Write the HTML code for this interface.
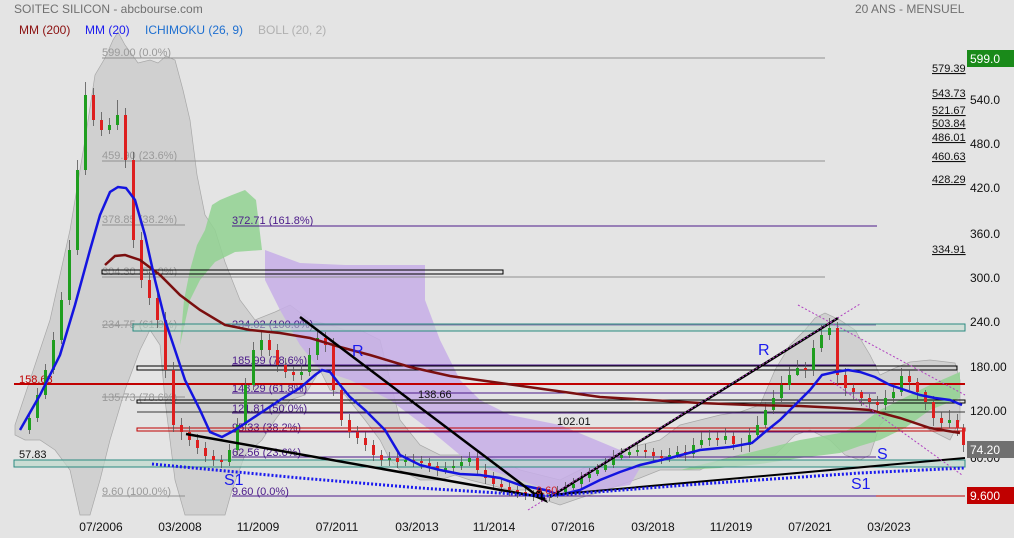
<!DOCTYPE html>
<html><head><meta charset="utf-8"><style>
body{margin:0;background:#e4e4e4;font-family:"Liberation Sans",sans-serif;}
svg{display:block}
</style></head><body>
<svg width="1014" height="538" xmlns="http://www.w3.org/2000/svg" font-family="Liberation Sans, sans-serif">
<rect width="1014" height="538" fill="#e4e4e4"/>
<polygon fill="#d0d0d0" stroke="#a8a8a8" stroke-width="0.7" points="15,425 30,380 50,320 70,230 85,140 95,75 105,58 113,40 118,32 125,45 138,63 150,60 158,63 166,56 175,60 183,90 190,120 197,175 205,215 215,230 225,262 240,300 255,320 275,312 290,305 310,320 330,325 345,330 360,330 380,340 400,420 420,445 440,455 460,455 480,455 500,460 520,470 540,475 560,480 580,470 600,460 620,450 640,445 660,440 680,425 700,420 720,415 740,412 760,405 775,370 790,345 805,330 815,318 825,313 840,320 855,330 870,355 880,375 895,368 910,362 930,360 955,363 960,380 960,420 950,440 930,430 910,420 895,410 880,425 870,455 860,460 845,455 830,440 810,430 795,435 775,455 760,455 740,455 720,460 700,470 680,470 660,470 640,478 620,485 600,492 580,498 560,505 545,500 530,490 510,490 490,485 470,480 455,475 440,480 420,480 400,470 390,460 380,440 365,420 345,395 330,390 320,370 305,395 290,400 275,420 262,440 245,455 232,490 225,515 210,515 195,515 185,515 175,480 165,400 160,345 150,330 140,350 125,390 110,440 100,480 90,515 80,515 70,470 55,450 40,440 25,440 15,435"/>
<polygon fill="#c7aee8" opacity="0.85" points="265,250 300,263 345,265 425,265 425,300 440,340 460,380 480,400 510,415 560,425 620,450 640,468 630,485 600,490 560,495 520,480 490,470 460,455 430,430 390,400 350,380 320,370 300,345 280,310 265,280"/>
<polygon fill="#92d292" opacity="0.85" points="180,345 184,300 190,270 197,245 205,230 212,205 220,200 232,195 245,190 256,200 262,250 235,252 215,262 200,280 190,300"/>
<polygon fill="#92d292" opacity="0.85" points="680,470 720,460 760,450 800,440 840,433 860,425 880,410 900,400 930,385 960,372 960,398 930,410 905,428 880,440 860,446 840,453 800,458 760,464 720,468"/>
<g stroke="#909090" stroke-width="1">
<line x1="102" y1="58" x2="825" y2="58"/><line x1="102" y1="161" x2="825" y2="161"/><line x1="102" y1="225" x2="185" y2="225"/><line x1="102" y1="277" x2="825" y2="277"/><line x1="102" y1="325" x2="185" y2="325"/><line x1="102" y1="397" x2="185" y2="397"/><line x1="102" y1="496" x2="185" y2="496"/>
</g>
<g font-size="11" fill="#9a9a9a">
<text x="102" y="56">599.00  (0.0%)</text><text x="102" y="159">459.90  (23.6%)</text><text x="102" y="223">378.85  (38.2%)</text><text x="102" y="275">304.30  (50.0%)</text><text x="102" y="328">234.75  (61.8%)</text><text x="102" y="401">135.73  (78.6%)</text><text x="102" y="495">9.60  (100.0%)</text>
</g>
<g stroke="#4b1a8a" stroke-width="1">
<line x1="232" y1="226" x2="877" y2="226"/><line x1="232" y1="325" x2="876" y2="325"/><line x1="232" y1="365" x2="876" y2="365"/><line x1="232" y1="393" x2="876" y2="393"/><line x1="232" y1="413" x2="876" y2="413"/><line x1="232" y1="432" x2="876" y2="432"/><line x1="232" y1="457" x2="876" y2="457"/><line x1="232" y1="496" x2="876" y2="496"/>
</g>
<line x1="876" y1="496" x2="965" y2="496" stroke="#c00000"/>
<g font-size="11" fill="#4b1a8a">
<text x="232" y="224">372.71  (161.8%)</text><text x="232" y="328">234.02  (100.0%)</text><text x="232" y="364">185.99  (78.6%)</text><text x="232" y="392">148.29  (61.8%)</text><text x="232" y="412">121.81  (50.0%)</text><text x="232" y="431">95.33  (38.2%)</text><text x="232" y="456">62.56  (23.6%)</text><text x="232" y="495">9.60  (0.0%)</text>
</g>
<rect x="133" y="324" width="832" height="7" fill="#bfd9cc" fill-opacity="0.5" stroke="#2a8a80"/>
<rect x="14" y="460" width="951" height="7" fill="#bfd9cc" fill-opacity="0.7" stroke="#2a8a80"/>
<line x1="14" y1="384" x2="965" y2="384" stroke="#c00000" stroke-width="2"/>
<rect x="102" y="270" width="401" height="4" fill="none" stroke="#000"/>
<rect x="137" y="366" width="820" height="4" fill="none" stroke="#000"/>
<rect x="137" y="400" width="828" height="3" fill="none" stroke="#000"/>
<line x1="137" y1="412" x2="965" y2="412" stroke="#000" stroke-width="0.8"/>
<rect x="137" y="428" width="828" height="3" fill="none" stroke="#c00000"/>
<text x="19" y="383" font-size="11" fill="#c00000">158.68</text>
<text x="19" y="458" font-size="11" fill="#111">57.83</text>
<text x="418" y="398" font-size="11" fill="#111">138.66</text>
<text x="557" y="425" font-size="11" fill="#111">102.01</text>
<!-- candle wicks -->
<path fill="none" stroke="#555" stroke-width="0.8" d="M29.5 412V434M37.5 388V422M45.5 364V399M53.5 332V374M61.5 292V344M69.5 240V305M77.5 160V255M85.5 82V175M93.5 88V126M101.5 112V136M109.5 118V134M117.5 100V130M125.5 108V168M133.5 152V248M141.5 232V288M149.5 272V305M157.5 290V328M165.5 312V378M173.5 362V432M181.5 418V440M189.5 426V446M197.5 434V454M205.5 442V462M213.5 450V466M221.5 455V468M229.5 444V466M237.5 418V455M245.5 378V430M253.5 342V390M261.5 330V356M269.5 334V356M277.5 344V372M285.5 358V378M293.5 366V381M301.5 365V380M309.5 348V376M317.5 330V360M325.5 332V352M333.5 338V396M341.5 384V426M349.5 414V438M357.5 426V444M365.5 432V451M373.5 440V461M381.5 450V466M389.5 452V466M397.5 452V468M405.5 454V466M413.5 454V467M421.5 456V469M429.5 458V472M437.5 462V476M445.5 462V474M453.5 460V472M461.5 456V470M469.5 452V466M477.5 452V476M485.5 464V484M493.5 472V490M501.5 478V493M509.5 482V496M517.5 486V498M525.5 488V500M533.5 490V501M541.5 490V502M549.5 489V501M557.5 486V498M565.5 482V494M573.5 478V490M581.5 472V488M589.5 468V482M597.5 464V476M605.5 458V472M613.5 450V468M621.5 448V460M629.5 446V458M637.5 444V456M645.5 444V458M653.5 448V462M661.5 450V464M669.5 448V462M677.5 446V458M685.5 445V461M693.5 438V458M701.5 432V448M709.5 430V446M717.5 432V446M725.5 428V444M733.5 432V450M741.5 438V452M749.5 428V452M757.5 416V440M765.5 402V428M773.5 390V414M781.5 376V402M789.5 366V390M797.5 360V376M805.5 362V378M813.5 340V376M821.5 325V352M829.5 318V340M837.5 322V384M845.5 368V396M853.5 384V400M861.5 390V406M869.5 394V410M877.5 396V412M885.5 390V410M893.5 384V402M901.5 368V396M909.5 370V390M917.5 378V400M925.5 390V410M933.5 396V426M941.5 412V430M949.5 410V428M957.5 414V436M963.5 424V452"/>
<g fill="#1f9e1f">
<rect x="28" y="418" width="3" height="12"/><rect x="36" y="395" width="3" height="23"/><rect x="44" y="370" width="3" height="25"/><rect x="52" y="340" width="3" height="30"/><rect x="60" y="300" width="3" height="40"/><rect x="68" y="250" width="3" height="50"/><rect x="76" y="170" width="3" height="80"/><rect x="84" y="95" width="3" height="75"/><rect x="108" y="125" width="3" height="5"/><rect x="116" y="115" width="3" height="10"/><rect x="228" y="450" width="3" height="12"/><rect x="236" y="425" width="3" height="25"/><rect x="244" y="385" width="3" height="40"/><rect x="252" y="350" width="3" height="35"/><rect x="260" y="340" width="3" height="10"/><rect x="300" y="372" width="3" height="3"/><rect x="308" y="355" width="3" height="17"/><rect x="316" y="338" width="3" height="17"/><rect x="388" y="458" width="3" height="2"/><rect x="404" y="460" width="3" height="2"/><rect x="444" y="468" width="3" height="2"/><rect x="452" y="466" width="3" height="2"/><rect x="460" y="462" width="3" height="4"/><rect x="468" y="458" width="3" height="4"/><rect x="548" y="495" width="3" height="2"/><rect x="556" y="492" width="3" height="3"/><rect x="564" y="488" width="3" height="4"/><rect x="572" y="484" width="3" height="4"/><rect x="580" y="478" width="3" height="6"/><rect x="588" y="474" width="3" height="4"/><rect x="596" y="470" width="3" height="4"/><rect x="604" y="465" width="3" height="5"/><rect x="612" y="458" width="3" height="7"/><rect x="620" y="455" width="3" height="3"/><rect x="628" y="452" width="3" height="3"/><rect x="636" y="450" width="3" height="2"/><rect x="668" y="455" width="3" height="3"/><rect x="676" y="452" width="3" height="3"/><rect x="692" y="445" width="3" height="9"/><rect x="700" y="440" width="3" height="5"/><rect x="708" y="438" width="3" height="2"/><rect x="724" y="436" width="3" height="4"/><rect x="748" y="435" width="3" height="10"/><rect x="756" y="425" width="3" height="10"/><rect x="764" y="410" width="3" height="15"/><rect x="772" y="398" width="3" height="12"/><rect x="780" y="385" width="3" height="13"/><rect x="788" y="375" width="3" height="10"/><rect x="796" y="368" width="3" height="7"/><rect x="812" y="348" width="3" height="22"/><rect x="820" y="335" width="3" height="13"/><rect x="828" y="328" width="3" height="7"/><rect x="884" y="398" width="3" height="7"/><rect x="892" y="392" width="3" height="6"/><rect x="900" y="376" width="3" height="16"/><rect x="948" y="420" width="3" height="3"/>
</g>
<g fill="#dd1f1f">
<rect x="92" y="95" width="3" height="25"/><rect x="100" y="120" width="3" height="10"/><rect x="124" y="115" width="3" height="45"/><rect x="132" y="160" width="3" height="80"/><rect x="140" y="240" width="3" height="40"/><rect x="148" y="280" width="3" height="18"/><rect x="156" y="298" width="3" height="22"/><rect x="164" y="320" width="3" height="50"/><rect x="172" y="370" width="3" height="55"/><rect x="180" y="425" width="3" height="7"/><rect x="188" y="432" width="3" height="8"/><rect x="196" y="440" width="3" height="8"/><rect x="204" y="448" width="3" height="8"/><rect x="212" y="456" width="3" height="4"/><rect x="220" y="460" width="3" height="2"/><rect x="268" y="340" width="3" height="10"/><rect x="276" y="350" width="3" height="15"/><rect x="284" y="365" width="3" height="7"/><rect x="292" y="372" width="3" height="3"/><rect x="324" y="338" width="3" height="7"/><rect x="332" y="345" width="3" height="45"/><rect x="340" y="390" width="3" height="30"/><rect x="348" y="420" width="3" height="12"/><rect x="356" y="432" width="3" height="6"/><rect x="364" y="438" width="3" height="7"/><rect x="372" y="445" width="3" height="10"/><rect x="380" y="455" width="3" height="5"/><rect x="396" y="458" width="3" height="4"/><rect x="412" y="460" width="3" height="2"/><rect x="420" y="461" width="3" height="2"/><rect x="428" y="463" width="3" height="3"/><rect x="436" y="466" width="3" height="4"/><rect x="476" y="458" width="3" height="12"/><rect x="484" y="470" width="3" height="8"/><rect x="492" y="478" width="3" height="6"/><rect x="500" y="484" width="3" height="3"/><rect x="508" y="487" width="3" height="3"/><rect x="516" y="490" width="3" height="2"/><rect x="524" y="492" width="3" height="2"/><rect x="532" y="494" width="3" height="2"/><rect x="540" y="495" width="3" height="2"/><rect x="644" y="450" width="3" height="2"/><rect x="652" y="452" width="3" height="4"/><rect x="660" y="456" width="3" height="2"/><rect x="684" y="452" width="3" height="2"/><rect x="716" y="438" width="3" height="2"/><rect x="732" y="436" width="3" height="8"/><rect x="740" y="444" width="3" height="2"/><rect x="804" y="368" width="3" height="2"/><rect x="836" y="328" width="3" height="47"/><rect x="844" y="375" width="3" height="13"/><rect x="852" y="388" width="3" height="4"/><rect x="860" y="392" width="3" height="6"/><rect x="868" y="398" width="3" height="4"/><rect x="876" y="402" width="3" height="3"/><rect x="908" y="376" width="3" height="6"/><rect x="916" y="382" width="3" height="10"/><rect x="924" y="392" width="3" height="10"/><rect x="932" y="402" width="3" height="16"/><rect x="940" y="418" width="3" height="5"/><rect x="956" y="420" width="3" height="8"/><rect x="962" y="428" width="3" height="17"/>
</g>
<polyline fill="none" stroke="#7a0f0f" stroke-width="2.5" points="105,265 115,256 125,255 140,260 160,275 180,295 200,310 225,325 250,330 280,333 310,338 340,347 370,355 410,367 450,376 500,383 550,390 600,397 650,400 700,403 750,405 800,406 840,408 870,410 900,418 930,428 960,433"/>
<polyline fill="none" stroke="#1414e0" stroke-width="2.5" points="20,430 40,395 60,355 75,305 90,250 100,215 110,192 118,187 126,188 135,200 145,235 155,280 165,320 175,350 185,380 200,410 210,432 222,437 235,430 250,420 265,410 280,400 300,388 315,375 322,370 330,372 340,385 350,397 365,410 385,430 400,455 420,465 440,470 460,474 480,475 500,478 520,485 545,490 560,495 580,490 600,480 620,472 640,465 670,458 700,450 730,447 752,443 765,432 780,420 795,405 810,390 822,375 835,372 848,370 860,372 875,377 890,385 905,390 920,395 935,398 950,400 962,405"/>
<g stroke="#000" stroke-width="2.5" fill="none">
<line x1="300" y1="317" x2="540" y2="498"/><line x1="186" y1="434" x2="540" y2="497"/><line x1="550" y1="497" x2="838" y2="318"/><line x1="550" y1="495" x2="965" y2="458" stroke-width="2"/>
</g>
<polygon points="548,503 532,496 540,488" fill="#000"/>
<polyline fill="none" stroke="#1a1aee" stroke-width="3" stroke-dasharray="2,2" points="152,464 300,478 420,488 545,496 700,484 860,473 965,468"/>
<g stroke="#b040c0" stroke-width="1" stroke-dasharray="2,2"><line x1="798" y1="305" x2="965" y2="395"/><line x1="830" y1="380" x2="962" y2="475"/><line x1="528" y1="510" x2="860" y2="304"/></g>
<g font-size="16" fill="#1a1aee"><text x="352" y="356">R</text><text x="758" y="355">R</text><text x="877" y="459">S</text><text x="224" y="485">S1</text><text x="851" y="489">S1</text></g>
<text x="536" y="494" font-size="11" fill="#d02020">9.60</text>
<g font-size="11" fill="#111" text-decoration="underline">
<text x="932" y="72">579.39</text><text x="932" y="97">543.73</text><text x="932" y="114">521.67</text><text x="932" y="127">503.84</text><text x="932" y="141">486.01</text><text x="932" y="160">460.63</text><text x="932" y="183">428.29</text><text x="932" y="253">334.91</text>
</g>
<rect x="966" y="0" width="48" height="538" fill="#e4e4e4"/>
<g font-size="12" fill="#111"><text x="970" y="104">540.0</text><text x="970" y="148">480.0</text><text x="970" y="192">420.0</text><text x="970" y="238">360.0</text><text x="970" y="282">300.0</text><text x="970" y="326">240.0</text><text x="970" y="371">180.00</text><text x="970" y="415">120.00</text><text x="970" y="462">60.00</text></g>
<rect x="967" y="50" width="47" height="17" fill="#1a8a1a"/><text x="970" y="63" font-size="12" fill="#fff">599.0</text>
<rect x="967" y="441" width="47" height="17" fill="#707070"/><text x="970" y="454" font-size="12" fill="#fff">74.20</text>
<rect x="967" y="487" width="47" height="17" fill="#c00000"/><text x="970" y="500" font-size="12" fill="#fff">9.600</text>
<g font-size="12" fill="#111" text-anchor="middle"><text x="101" y="531">07/2006</text><text x="180" y="531">03/2008</text><text x="258" y="531">11/2009</text><text x="337" y="531">07/2011</text><text x="417" y="531">03/2013</text><text x="494" y="531">11/2014</text><text x="573" y="531">07/2016</text><text x="653" y="531">03/2018</text><text x="731" y="531">11/2019</text><text x="810" y="531">07/2021</text><text x="889" y="531">03/2023</text></g>
<text x="14" y="13" font-size="12" fill="#707070">SOITEC SILICON - abcbourse.com</text>
<text x="19" y="34" font-size="12" fill="#8b1010">MM (200)</text>
<text x="85" y="34" font-size="12" fill="#1a1aee">MM (20)</text>
<text x="145" y="34" font-size="12" fill="#1e6fd0">ICHIMOKU (26, 9)</text>
<text x="258" y="34" font-size="12" fill="#b0b0b0">BOLL (20, 2)</text>
<text x="855" y="13" font-size="12" fill="#707070">20 ANS - MENSUEL</text>
</svg>
</body></html>
